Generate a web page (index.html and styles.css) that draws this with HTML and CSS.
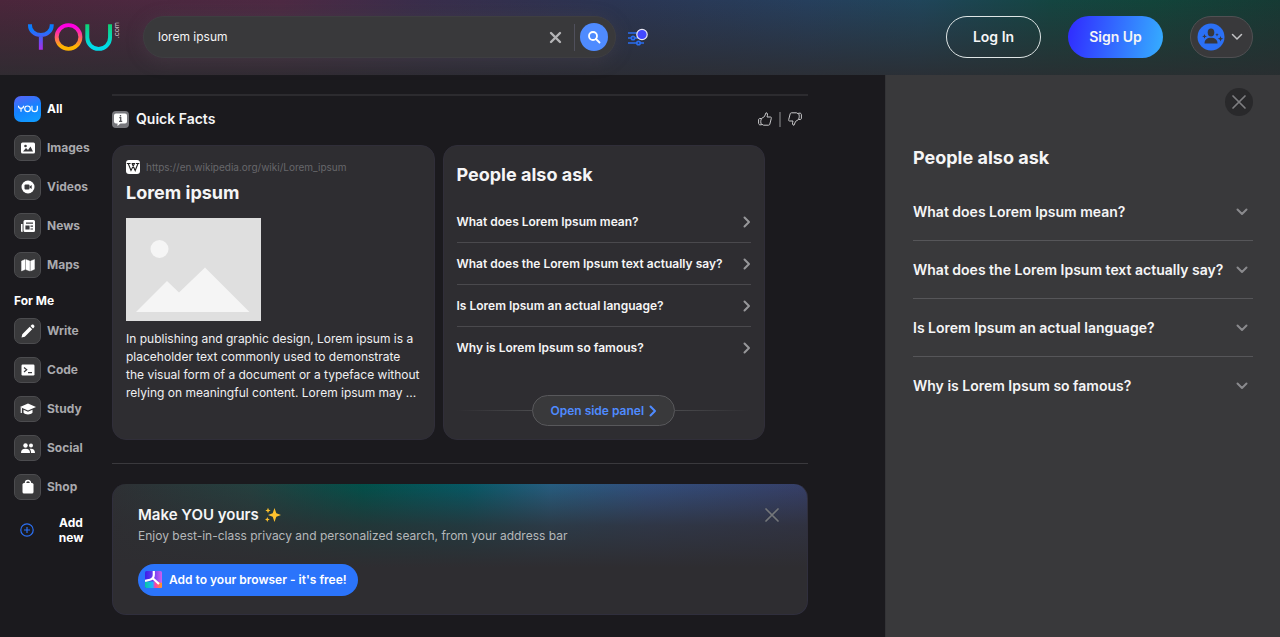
FILE: index.html
```html
<!DOCTYPE html>
<html lang="en">
<head>
<meta charset="utf-8">
<meta name="viewport" content="width=device-width, initial-scale=1">
<title>lorem ipsum - YOU.com</title>
<link rel="stylesheet" href="styles.css">
</head>
<body>
<svg class="defs" aria-hidden="true">
  <defs>
    <linearGradient id="gy" x1="0" y1="0" x2="0" y2="1"><stop offset="0.2" stop-color="#0a7cff"/><stop offset="1" stop-color="#b02ae8"/></linearGradient>
    <linearGradient id="go" x1="0" y1="0" x2="0" y2="1"><stop offset="0.1" stop-color="#ff00e0"/><stop offset="0.9" stop-color="#ffb400"/></linearGradient>
    <linearGradient id="gu" x1="0" y1="0" x2="0" y2="1"><stop offset="0" stop-color="#10d070"/><stop offset="0.9" stop-color="#00dcea"/></linearGradient>
    <symbol id="chev-r" viewBox="0 0 8 12"><path d="M1.5 1.5 6 6 1.5 10.500" fill="none" stroke="currentColor" stroke-width="2" stroke-linecap="round" stroke-linejoin="round"/></symbol>
    <symbol id="chev-d" viewBox="0 0 12 8"><path d="M1.500 1.500 6 6 10.500 1.500" fill="none" stroke="currentColor" stroke-width="2" stroke-linecap="round" stroke-linejoin="round"/></symbol>
    <symbol id="cross" viewBox="0 0 16 16"><path d="M2 2 14 14M14 2 2 14" fill="none" stroke="currentColor" stroke-width="1.700" stroke-linecap="round"/></symbol>
  </defs>
</svg>

<header class="topbar">
  <a class="logo" href="#" aria-label="YOU.com home">
    <svg width="85" height="30" viewBox="0 0 86 30" fill="none" stroke-width="4">
      <path d="M2 2v1c0 6 5 10 11 10s11-4 11-10V2M13 13v15" stroke="url(#gy)"/>
      <circle cx="41" cy="15" r="12" stroke="url(#go)"/>
      <path d="M60 2v13.500a11 11 0 0 0 23 0V2" stroke="url(#gu)"/>
    </svg>
    <span class="logo-com">.com</span>
  </a>
  <form class="search" role="search">
    <input class="search-input" type="text" aria-label="Search" value="lorem ipsum">
    <button class="bare clear" type="button" aria-label="Clear"><svg width="13" height="13" viewBox="0 0 13 13"><path d="M2 2 11 11M11 2 2 11" stroke="#b4b4b6" stroke-width="2.400" stroke-linecap="round"/></svg></button>
    <span class="search-divider"></span>
    <button class="search-go" type="submit" aria-label="Search"><svg width="14" height="14" viewBox="0 0 14 14" fill="none" stroke="#fff" stroke-width="1.800" stroke-linecap="round"><circle cx="6" cy="6" r="4"/><path d="m9 9 3.500 3.500"/></svg></button>
  </form>
  <button class="bare filters" type="button" aria-label="Search settings">
    <svg width="22" height="20" viewBox="0 0 22 20" fill="none"><g stroke="#2a6df0" stroke-width="1.700"><path d="M1 6h9M1 11h3M8 11h9M1 16h8.500M13.500 16H17"/><circle cx="6" cy="11" r="1.700"/><circle cx="11.500" cy="16" r="1.700"/></g><circle cx="15" cy="7.500" r="5.200" fill="#4348ff" stroke="#e8e8f4" stroke-width="1.200"/></svg>
  </button>
  <div class="account">
    <button class="pill login" type="button">Log In</button>
    <button class="pill signup" type="button">Sign Up</button>
    <button class="pill profile" type="button" aria-label="Account menu">
      <svg width="28" height="28" viewBox="0 0 28 28"><circle cx="14" cy="14" r="13.500" fill="#2b70f5"/><g fill="#37373d"><ellipse cx="14" cy="9.500" rx="3.300" ry="3.900"/><path d="M7.500 20.500c0-3.800 2.600-5.700 6.500-5.700s6.500 1.900 6.500 5.700z"/><path d="m7.500 11 .7 1.700 1.700.7-1.700.7-.7 1.700-.7-1.700-1.700-.7 1.700-.7zM23.500 13l.8 2 2 .8-2 .8-.8 2-.8-2-2-.8 2-.8zM20 10l.5 1.200 1.200.5-1.200.5-.5 1.200-.5-1.200-1.200-.5 1.200-.5z"/></g></svg>
      <svg width="12" height="8" viewBox="0 0 12 8"><path d="M1.500 1.500 6 6l4.500-4.500" fill="none" stroke="#c4c4c6" stroke-width="1.500" stroke-linecap="round"/></svg>
    </button>
  </div>
</header>

<div class="layout">
  <nav class="side">
    <ul class="apps">
      <li><a class="app active" href="#"><span class="tile tile-you"><svg viewBox="0 0 86 32" fill="none" stroke="#fff" stroke-width="5"><path d="M2 2v1c0 6 5 10 11 10s11-4 11-10V2M13 13v15"/><circle cx="41" cy="15" r="12"/><path d="M60 2v13.500a11 11 0 0 0 23 0V2"/></svg></span>All</a></li>
      <li><a class="app" href="#"><span class="tile"><svg viewBox="0 0 16 16"><rect x="1" y="2.500" width="14" height="11" rx="1.500" fill="#fff"/><path d="M3 11.500 6 8l2 2 2.500-3.500L13 11.500z" fill="#3a3a3d"/><circle cx="5.500" cy="6" r="1.300" fill="#3a3a3d"/></svg></span>Images</a></li>
      <li><a class="app" href="#"><span class="tile"><svg viewBox="0 0 16 16"><circle cx="8" cy="8" r="6.500" fill="#fff"/><rect x="4.500" y="5.500" width="5" height="5" rx="1" fill="#3a3a3d"/><path d="m9.500 7.500 2.200-1.600v4.200L9.500 8.500z" fill="#3a3a3d"/></svg></span>Videos</a></li>
      <li><a class="app" href="#"><span class="tile"><svg viewBox="0 0 16 16"><path d="M5 2h8.500A1.500 1.500 0 0 1 15 3.500v9a1.500 1.500 0 0 1-1.500 1.500H5a1.500 1.500 0 0 1-1.500-1.500v-9A1.500 1.500 0 0 1 5 2zM1 6h1.600v8H2a1 1 0 0 1-1-1z" fill="#fff"/><path d="M6 5.200h7M6 8h3v3H6zM10.500 8.200H13M10.500 11H13" stroke="#3a3a3d" stroke-width="1.200" fill="#3a3a3d"/></svg></span>News</a></li>
      <li><a class="app" href="#"><span class="tile"><svg viewBox="0 0 16 16"><path d="M1.500 4 5 2.500v10L1.500 14zM5.800 2.500l4 1.500v10l-4-1.500zM10.600 4 14.500 2.500v9.700L10.600 14z" fill="#fff" stroke="#fff" stroke-width=".4" stroke-linejoin="round"/></svg></span>Maps</a></li>
    </ul>
    <h2 class="side-title">For Me</h2>
    <ul class="apps">
      <li><a class="app" href="#"><span class="tile"><svg viewBox="0 0 16 16"><path d="m1.500 14.500.8-3.300 7.400-7.400 2.500 2.500-7.400 7.400zM10.500 3l1-1c1.500-1.500 4 1 2.500 2.500l-1 1z" fill="#fff"/></svg></span>Write</a></li>
      <li><a class="app" href="#"><span class="tile"><svg viewBox="0 0 16 16"><rect x="1.500" y="2.500" width="13" height="11" rx="1.200" fill="#fff"/><path d="m4 5.500 2.700 2.300L4 10M8 10.700h4" stroke="#3a3a3d" stroke-width="1.200" fill="none"/></svg></span>Code</a></li>
      <li><a class="app" href="#"><span class="tile"><svg viewBox="0 0 16 16"><path d="m8 2.500 8 3.500-8 3.500L0 6zM3.500 8.700 8 10.700l4.500-2v3C10.500 14 5.500 14 3.500 11.700z" fill="#fff"/><path d="M1.300 6.500v5.500" stroke="#fff" stroke-width="1.200"/></svg></span>Study</a></li>
      <li><a class="app" href="#"><span class="tile"><svg viewBox="0 0 16 16" fill="#fff"><circle cx="5.500" cy="5.500" r="2.200"/><circle cx="11" cy="5.500" r="2"/><path d="M1 13c0-3 1.500-4.300 4.500-4.300S10 10 10 13zM11 13c0-2-.4-3.300-1.500-4.200 3.300-.6 5.500.6 5.500 4.200z"/></svg></span>Social</a></li>
      <li><a class="app" href="#"><span class="tile"><svg viewBox="0 0 16 16"><rect x="2.500" y="4" width="11" height="10.500" rx="1.500" fill="#fff"/><path d="M5.500 5.500V4a2.500 2.500 0 0 1 5 0v1.500" fill="none" stroke="#fff" stroke-width="1.500"/></svg></span>Shop</a></li>
    </ul>
    <button class="bare add-new" type="button"><svg width="14" height="14" viewBox="0 0 14 14" fill="none" stroke="#2b70f5" stroke-width="1.200"><circle cx="7" cy="7" r="6.200"/><path d="M7 4v6M4 7h6"/></svg><span>Add new</span></button>
  </nav>

  <main class="results">
    <section class="facts">
      <div class="facts-head">
        <svg width="17" height="17" viewBox="0 0 17 17"><rect width="17" height="17" rx="4" fill="#77777c"/><path d="M4 2.500h9A2 2 0 0 1 15 4.500v6a2 2 0 0 1-2 2H8.500L5.500 15v-2.500H4a2 2 0 0 1-2-2v-6a2 2 0 0 1 2-2z" fill="#fff"/><path d="M8.500 4v1.500M7.300 6.700h1.400v3.500M7 10.300h3.200" stroke="#55555a" stroke-width="1.300" fill="none"/></svg>
        <h2 class="facts-title">Quick Facts</h2>
        <div class="votes">
          <button class="bare" type="button" aria-label="Helpful"><svg width="14" height="14" viewBox="0 0 14 14" fill="none" stroke="#c8c8ca" stroke-linejoin="round"><path d="M3.500 6.500 6.500 4.500 8 .8c1.800 0 1.800 1.500 1 4.200h3.500c1 0 1 1 .7 1.800l-1.400 5.400c-.2.600-.6 1-1.200 1H5.500l-2-1.200M3.500 6.500H1.800C.8 6.500.6 7.200.6 8v3.200c0 1 .6 1.600 1.400 1.600h1.500c-1-2-1-4.200 0-6.300z"/></svg></button>
          <span class="votes-divider"></span>
          <button class="bare" type="button" aria-label="Not helpful"><svg width="14" height="14" viewBox="0 0 14 14" fill="none" stroke="#c8c8ca" stroke-linejoin="round"><path d="M10.500 7.500 7.500 9.500 6 13.200c-1.800 0-1.800-1.500-1-4.200H1.500c-1 0-1-1-.7-1.800l1.400-5.400c.2-.6.600-1 1.200-1h5.100l2 1.200M10.500 7.500h1.700c1 0 1.200-.7 1.200-1.500V2.800c0-1-.6-1.600-1.400-1.600h-1.500c1 2 1 4.200 0 6.300z"/></svg></button>
        </div>
      </div>
      <div class="cards">
        <article class="card wiki">
          <div class="source"><svg width="14" height="14" viewBox="0 0 14 14"><rect width="14" height="14" rx="3" fill="#fff"/><path d="M.8 3.500h3.800M5.700 3.500h3.500M10 3.500h3.300M2.200 3.500 5 10.500l3.500-7M6 3.500l3.200 7L12 3.500" fill="none" stroke="#222" stroke-width="1.100"/></svg><a href="#">https://en.wikipedia.org/wiki/Lorem_ipsum</a></div>
          <h3 class="card-title">Lorem ipsum</h3>
          <svg class="thumb" viewBox="0 0 135 103" role="img" aria-label="Image placeholder"><rect width="135" height="103" fill="#dfdfdf"/><circle cx="33.500" cy="31" r="9" fill="#f5f5f5"/><path d="m10 94 31-31 12 11.500L79 49.500 123.500 94z" fill="#f5f5f5"/></svg>
          <p class="extract">In publishing and graphic design, Lorem ipsum is a placeholder text commonly used to demonstrate the visual form of a document or a typeface without relying on meaningful content. Lorem ipsum may ...</p>
        </article>
        <article class="card ask">
          <h3 class="card-title">People also ask</h3>
          <ul class="questions">
            <li><button class="bare question" type="button">What does Lorem Ipsum mean?<svg width="8" height="12"><use href="#chev-r"/></svg></button></li>
            <li><button class="bare question" type="button">What does the Lorem Ipsum text actually say?<svg width="8" height="12"><use href="#chev-r"/></svg></button></li>
            <li><button class="bare question" type="button">Is Lorem Ipsum an actual language?<svg width="8" height="12"><use href="#chev-r"/></svg></button></li>
            <li><button class="bare question" type="button">Why is Lorem Ipsum so famous?<svg width="8" height="12"><use href="#chev-r"/></svg></button></li>
          </ul>
          <div class="open-row"><button class="open-panel" type="button">Open side panel<svg width="8" height="12"><use href="#chev-r"/></svg></button></div>
        </article>
      </div>
    </section>

    <section class="promo">
      <div class="promo-head">
        <h2 class="promo-title">Make YOU yours <svg width="16" height="16" viewBox="0 0 16 16" fill="#ffc22e"><path d="M9.500 1 11.300 6.200 16 8l-4.700 1.800L9.500 15 7.700 9.800 3 8l4.700-1.800zM3 .8l.8 1.900 1.900.8-1.900.8L3 6.200l-.8-1.900L.3 3.500l1.900-.8zM2.300 10l.7 1.800 1.800.7-1.800.7-.7 1.800-.7-1.800-1.600-.7 1.600-.7z"/></svg></h2>
        <button class="bare promo-close" type="button" aria-label="Dismiss"><svg width="16" height="16"><use href="#cross"/></svg></button>
      </div>
      <p class="promo-text">Enjoy best-in-class privacy and personalized search, from your address bar</p>
      <button class="add-browser" type="button">
        <svg width="17" height="17" viewBox="0 0 17 17"><defs><linearGradient id="pa" x1="0" y1="0" x2="1" y2="0"><stop offset="0" stop-color="#3a20e8"/><stop offset=".5" stop-color="#6a3cf0"/><stop offset="1" stop-color="#d060f0"/></linearGradient><linearGradient id="pb" x1="0" y1="0" x2="1" y2="0"><stop offset="0" stop-color="#08c8a0"/><stop offset=".45" stop-color="#1cb4ff"/><stop offset=".6" stop-color="#ff3cae"/><stop offset="1" stop-color="#ff9a20"/></linearGradient></defs><rect width="17" height="17" rx="1.500" fill="url(#pa)"/><path d="M0 10.500h12l5 1.500v3.500a1.500 1.500 0 0 1-1.500 1.500h-14A1.500 1.500 0 0 1 0 15.500z" fill="url(#pb)"/><path d="M8.800 0v4c0 2.500-1.500 4-4 4.800L0 10M7.500 7l6.500 6" fill="none" stroke="#fff" stroke-width="2.200"/></svg>
        Add to your browser - it's free!</button>
    </section>
  </main>

  <aside class="panel">
    <button class="panel-close" type="button" aria-label="Close panel"><svg width="16" height="16"><use href="#cross"/></svg></button>
    <h2 class="card-title">People also ask</h2>
    <ul class="accordion">
      <li><button class="bare acc" type="button">What does Lorem Ipsum mean?<svg width="12" height="8"><use href="#chev-d"/></svg></button></li>
      <li><button class="bare acc" type="button">What does the Lorem Ipsum text actually say?<svg width="12" height="8"><use href="#chev-d"/></svg></button></li>
      <li><button class="bare acc" type="button">Is Lorem Ipsum an actual language?<svg width="12" height="8"><use href="#chev-d"/></svg></button></li>
      <li><button class="bare acc" type="button">Why is Lorem Ipsum so famous?<svg width="12" height="8"><use href="#chev-d"/></svg></button></li>
    </ul>
  </aside>
</div>
</body>
</html>
```

FILE: styles.css
```css
* { box-sizing: border-box; }
body {
  margin: 0;
  min-height: 100vh;
  display: flex;
  flex-direction: column;
  background: #1b1a1e;
  color: #f5f5f6;
  font: 400 12px/18px Inter, "Liberation Sans", sans-serif;
}
ul { list-style: none; margin: 0; padding: 0; }
h2, h3, p { margin: 0; }
a { color: inherit; text-decoration: none; }
button, input { font: inherit; color: inherit; }
svg { display: block; flex: none; }
.defs { position: absolute; width: 0; height: 0; }
.bare { background: none; border: 0; padding: 0; cursor: pointer; }

/* Top bar */
.topbar {
  display: flex;
  align-items: center;
  height: 75px;
  padding: 0 27px 1px 28px;
  background:
    linear-gradient(to bottom, rgba(44, 44, 48, 0) 0%, rgba(44, 44, 48, 0.85) 100%),
    linear-gradient(to right, #4b263b 0%, #4e2a44 22%, #3a2e4c 33%, #2b3553 48%, #263f5d 63%, #20455a 72%, #144541 82%, #12443a 90%, #163a34 100%);
}
.logo { display: flex; align-items: flex-start; width: 115px; }
.logo-com {
  writing-mode: vertical-rl;
  transform: rotate(180deg);
  font-size: 7px;
  line-height: 7px;
  color: #c9bfc6;
}
.search {
  display: flex;
  align-items: center;
  flex: 0 1 473px;
  height: 42px;
  padding: 0 7px 0 14px;
  border: 1px solid #3e3e41;
  border-radius: 21px;
  background: #39393b;
  box-shadow: 0 3px 18px rgba(90, 80, 90, 0.3);
}
.search-input { flex: 1; min-width: 0; border: 0; outline: 0; padding: 0; background: none; }
.clear { padding: 0 12px; }
.search-divider { width: 1px; height: 27px; margin-right: 5px; background: #50505c; }
.search-go {
  display: grid;
  place-items: center;
  width: 28px;
  height: 28px;
  padding: 0;
  border: 0;
  border-radius: 50%;
  background: #4f8bff;
}
.filters { margin-left: 11px; }
.account { display: flex; gap: 27px; margin-left: auto; }
.pill { height: 42px; border-radius: 21px; font-size: 14px; font-weight: 600; }
.login { width: 95px; border: 1px solid #dfe6e6; background: none; }
.signup { width: 95px; border: 0; background: linear-gradient(100deg, #3030ff 5%, #35a8ff 95%); }
.profile {
  display: flex;
  align-items: center;
  gap: 6px;
  width: 63px;
  padding: 0 6px;
  border: 1px solid #505053;
  background: #39393b;
}

.layout { flex: 1; display: grid; grid-template-columns: 112px minmax(0, 1fr) 395px; }

/* App navigation */
.side { padding: 21px 0 20px 14px; font-weight: 700; color: #a9a9ad; }
.apps { display: grid; gap: 13px; }
.app { display: flex; align-items: center; gap: 6px; }
.active, .side-title, .add-new { color: #fff; }
.tile {
  display: grid;
  place-items: center;
  width: 27px;
  height: 26px;
  border: 1px solid #4c4c4f;
  border-radius: 7px;
  background: #39393b;
}
.tile svg { width: 16px; height: 16px; }
.tile-you { border: 0; background: linear-gradient(160deg, #5b62f5, #1483ff 50%, #10a0ff); }
.tile-you svg { width: 20px; height: 8px; }
.side-title { margin: 14px 0 8px; font-size: 12px; font-weight: 700; }
.add-new { display: flex; align-items: center; gap: 20px; width: 74px; margin-top: 15px; padding-left: 6px; line-height: 15px; font-weight: 700; }

/* Results */
.results { padding: 19px 77px 24px 0; }
.facts { border: solid #2c2b2f; border-width: 2px 0 1px; border-bottom-color: #3a393d; padding-bottom: 23px; }
.facts-head { display: flex; align-items: center; gap: 7px; height: 49px; padding: 0 6px 3px 0; }
.facts-title { font-size: 14px; font-weight: 600; }
.votes { display: flex; align-items: center; gap: 7px; margin-left: auto; }
.votes-divider { width: 2px; height: 15px; background: #555558; }
.cards { display: grid; grid-template-columns: 1fr 1fr; gap: 8px; margin-right: 43px; }
.card { min-height: 295px; border: 1px solid #302e39; border-radius: 14px; background: #2e2d31; }
.card-title { font-size: 18px; line-height: 26px; font-weight: 700; }
.wiki { padding: 13px; }
.source { display: flex; align-items: center; gap: 6px; height: 15px; font-size: 10px; color: #67676b; }
.wiki .card-title { margin: 6px 0 12px; }
.thumb { width: 135px; height: 103px; }
.extract { margin-top: 9px; color: #f0f0f1; }
.ask { display: flex; flex-direction: column; padding: 16px 13px 13px; }
.questions { margin-top: 13px; }
.questions li + li { border-top: 1px solid #4a494d; }
.question { display: flex; align-items: center; justify-content: space-between; width: 100%; height: 41px; font-weight: 600; text-align: left; }
.question svg { color: #97979a; }
.open-row { display: flex; align-items: center; margin-top: auto; }
.open-row::before, .open-row::after { content: ""; flex: 1; height: 1px; background: linear-gradient(to right, transparent, #4a4a4d); }
.open-row::after { background: linear-gradient(to left, transparent, #4a4a4d); }
.open-panel {
  display: flex;
  align-items: center;
  gap: 5px;
  height: 31px;
  padding: 0 17px;
  border: 1px solid #58585b;
  border-radius: 16px;
  background: #39393b;
  color: #4f8bff;
  font-weight: 600;
}

/* Promo */
.promo {
  margin-top: 20px;
  padding: 19px 26px 18px 25px;
  border: 1px solid #302f3d;
  border-top: 0;
  border-radius: 14px;
  background:
    linear-gradient(to bottom, rgba(46, 45, 49, 0) 0%, rgba(46, 45, 49, 0.72) 32%, #2e2d31 64%),
    linear-gradient(to right, #2e3034 0%, #24403f 20%, #02504a 36%, #065864 51%, #265d80 63%, #324e7c 77%, #363f68 100%);
}
.promo-head { display: flex; justify-content: space-between; align-items: center; }
.promo-title { display: flex; gap: 6px; align-items: center; font-size: 15px; line-height: 23px; font-weight: 600; }
.promo-close { color: #74777a; margin-right: 1px; }
.promo-text { margin-top: 1px; color: #b5b8ba; }
.add-browser {
  display: flex;
  align-items: center;
  gap: 7px;
  height: 32px;
  margin-top: 19px;
  padding: 0 11px 1px 7px;
  border: 0;
  border-radius: 16px;
  background: #2b74fb;
  color: #fff;
  font-weight: 600;
}

/* Side panel */
.panel { display: flex; flex-direction: column; padding: 13px 27px 20px; border-left: 1px solid #333336; background: #39393b; }
.panel-close {
  display: grid;
  place-items: center;
  align-self: flex-end;
  width: 28px;
  height: 28px;
  margin-bottom: 29px;
  padding: 0;
  border: 0;
  border-radius: 50%;
  background: #29292b;
  color: #7e7e81;
}
.accordion { margin-top: 12px; }
.accordion li + li { border-top: 1px solid #565659; }
.acc { display: flex; align-items: center; justify-content: space-between; width: 100%; height: 57px; padding-right: 5px; font-size: 14px; font-weight: 600; text-align: left; }
.acc svg { color: #8a8a8d; }
```
